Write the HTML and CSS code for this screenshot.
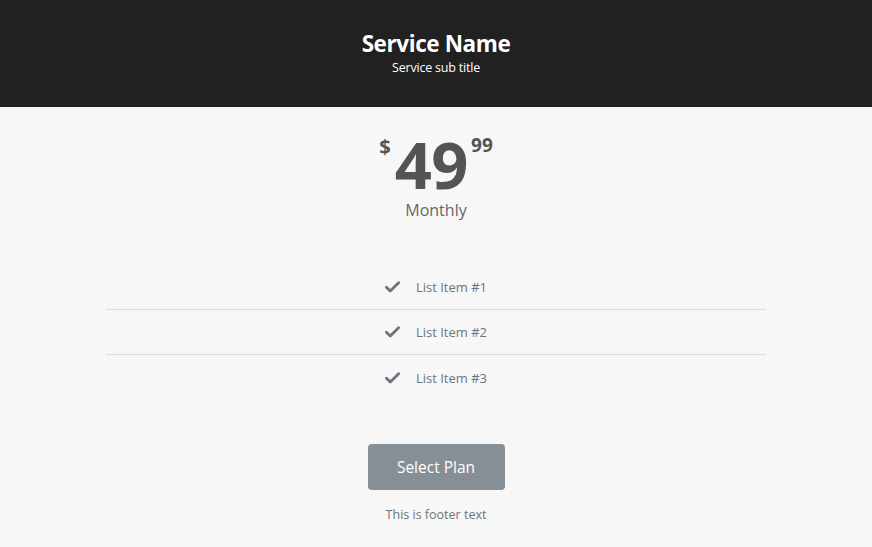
FILE: index.html
```html
<!DOCTYPE html>
<html>
<head>
<meta charset="utf-8">
<link rel="stylesheet" href="styles.css">
</head>
<body>
<div class="card">
  <header class="card-header">
    <h1 class="title">Service Name</h1>
    <div class="subtitle">Service sub title</div>
  </header>
  <section class="price-block">
    <div class="price">
      <span class="currency">$</span>
      <span class="amount">49</span>
      <span class="cents">99</span>
    </div>
    <div class="period">Monthly</div>
  </section>
  <ul class="features">
    <li class="feature"><svg class="check" viewBox="0 0 16 12" width="15" height="12"><path d="M1.5 6.2 L5.6 10.2 L14.5 1.5" fill="none" stroke="currentColor" stroke-width="3" stroke-linecap="round" stroke-linejoin="round"/></svg><span>List Item #1</span></li>
    <li class="feature"><svg class="check" viewBox="0 0 16 12" width="15" height="12"><path d="M1.5 6.2 L5.6 10.2 L14.5 1.5" fill="none" stroke="currentColor" stroke-width="3" stroke-linecap="round" stroke-linejoin="round"/></svg><span>List Item #2</span></li>
    <li class="feature"><svg class="check" viewBox="0 0 16 12" width="15" height="12"><path d="M1.5 6.2 L5.6 10.2 L14.5 1.5" fill="none" stroke="currentColor" stroke-width="3" stroke-linecap="round" stroke-linejoin="round"/></svg><span>List Item #3</span></li>
  </ul>
  <div class="actions">
    <button class="btn">Select Plan</button>
    <div class="footer-text">This is footer text</div>
  </div>
</div>
</body>
</html>
```
FILE: styles.css
```css
html, body {
  margin: 0;
  padding: 0;
  background: #f7f7f7;
  font-family: "Open Sans", "Noto Sans", sans-serif;
}
.card {
  display: flex;
  flex-direction: column;
  align-items: center;
  min-height: 547px;
}
.card-header {
  align-self: stretch;
  background: #212121;
  color: #fff;
  height: 107px;
  box-sizing: border-box;
  padding-top: 29px;
  text-align: center;
}
.title {
  margin: 0;
  font-size: 22.5px;
  font-weight: 700;
  line-height: 30px;
  letter-spacing: -0.4px;
}
.subtitle {
  font-size: 12.5px;
  line-height: 16px;
  margin-top: 1px;
  letter-spacing: -0.2px;
}
.price-block {
  margin-top: 26px;
  text-align: center;
  color: #545454;
}
.price {
  display: flex;
  align-items: flex-start;
  justify-content: center;
  height: 62px;
}
.currency {
  font-size: 20px;
  font-weight: 700;
  line-height: 26px;
  margin-top: 1px;
  margin-right: 4px;
}
.amount {
  font-size: 65px;
  font-weight: 700;
  line-height: 62px;
  letter-spacing: -0.5px;
}
.cents {
  font-size: 19px;
  font-weight: 700;
  line-height: 24px;
  margin-top: 0;
  margin-left: 3px;
}
.period {
  font-size: 16px;
  color: #666;
  line-height: 22px;
  margin-top: 4px;
}
.features {
  list-style: none;
  padding: 0;
  margin: 44px 0 0;
  width: 660px;
  color: #6c757d;
}
.feature {
  display: flex;
  align-items: center;
  justify-content: center;
  box-sizing: border-box;
  height: 45px;
  font-size: 13px;
  border-bottom: 1px solid #dcdcdc;
}
.feature:last-child {
  border-bottom: none;
}
.check {
  color: #6c757d;
  margin-right: 16px;
}
.actions {
  margin-top: 44px;
  display: flex;
  flex-direction: column;
  align-items: center;
}
.btn {
  width: 137px;
  height: 46px;
  border: none;
  border-radius: 4px;
  background: #868e96;
  color: #fff;
  font-family: inherit;
  font-size: 15.5px;
}
.footer-text {
  margin-top: 16px;
  font-size: 12.5px;
  color: #6c757d;
}
```
